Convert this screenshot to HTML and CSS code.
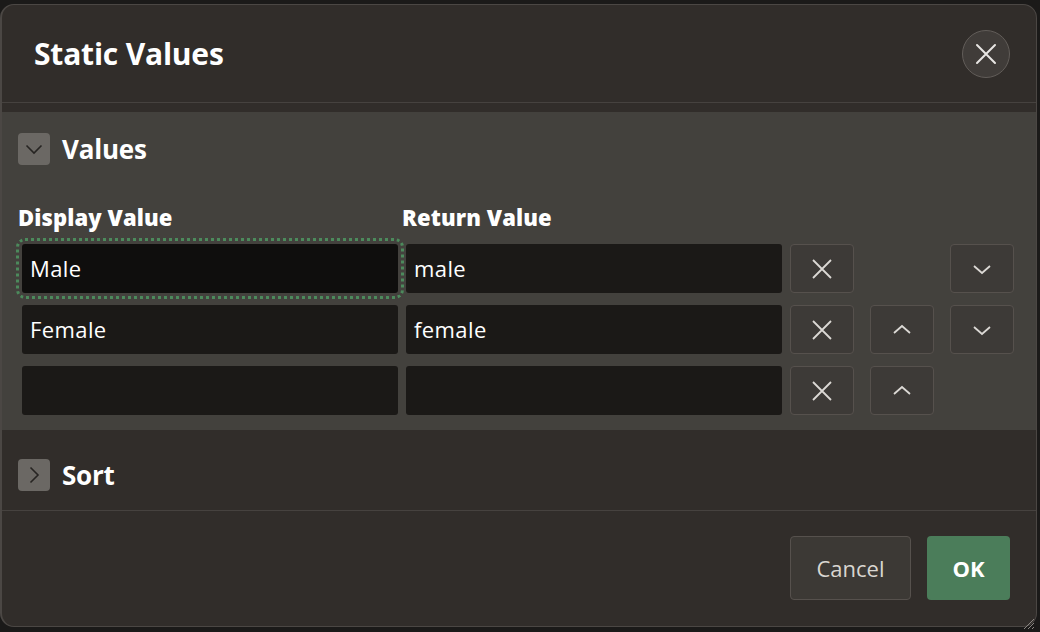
FILE: index.html
```html
<!DOCTYPE html>
<html>
<head>
<meta charset="utf-8">
<link rel="stylesheet" href="styles.css">
</head>
<body>
<div class="dialog">
  <div class="dlg-head">
    <h1 class="dlg-title">Static Values</h1>
    <button class="close-btn" aria-label="Close">
      <svg width="22" height="22" viewBox="0 0 22 22"><path d="M2 2L20 20M20 2L2 20" stroke="#e8e6e3" stroke-width="2" stroke-linecap="round"/></svg>
    </button>
  </div>
  <div class="dlg-body">
    <section class="region region-open">
      <div class="region-head">
        <span class="toggle">
          <svg width="20" height="20" viewBox="0 0 20 20"><path d="M2.5 6.5L10 14L17.5 6.5" fill="none" stroke="#262422" stroke-width="1.6"/></svg>
        </span>
        <h2 class="region-title">Values</h2>
      </div>
      <div class="grid-wrap">
        <div class="labels">
          <div class="lbl">Display Value</div>
          <div class="lbl">Return Value</div>
        </div>
        <div class="row">
          <div class="inp inp-focus">Male</div>
          <div class="inp">male</div>
          <button class="ib"><svg width="22" height="22" viewBox="0 0 22 22"><path d="M2 2L20 20M20 2L2 20" stroke="#dcd9d5" stroke-width="1.8"/></svg></button>
          <span class="cell"></span>
          <span class="cell"><button class="ib"><svg width="20" height="12" viewBox="0 0 20 12"><path d="M2 3L10 10L18 3" fill="none" stroke="#dcd9d5" stroke-width="1.8"/></svg></button></span>
        </div>
        <div class="row">
          <div class="inp">Female</div>
          <div class="inp">female</div>
          <button class="ib"><svg width="22" height="22" viewBox="0 0 22 22"><path d="M2 2L20 20M20 2L2 20" stroke="#dcd9d5" stroke-width="1.8"/></svg></button>
          <span class="cell"><button class="ib"><svg width="20" height="12" viewBox="0 0 20 12"><path d="M2 9L10 2L18 9" fill="none" stroke="#dcd9d5" stroke-width="1.8"/></svg></button></span>
          <span class="cell"><button class="ib"><svg width="20" height="12" viewBox="0 0 20 12"><path d="M2 3L10 10L18 3" fill="none" stroke="#dcd9d5" stroke-width="1.8"/></svg></button></span>
        </div>
        <div class="row">
          <div class="inp"></div>
          <div class="inp"></div>
          <button class="ib"><svg width="22" height="22" viewBox="0 0 22 22"><path d="M2 2L20 20M20 2L2 20" stroke="#dcd9d5" stroke-width="1.8"/></svg></button>
          <span class="cell"><button class="ib"><svg width="20" height="12" viewBox="0 0 20 12"><path d="M2 9L10 2L18 9" fill="none" stroke="#dcd9d5" stroke-width="1.8"/></svg></button></span>
          <span class="cell"></span>
        </div>
      </div>
    </section>
    <section class="region region-closed">
      <div class="region-head">
        <span class="toggle">
          <svg width="20" height="20" viewBox="0 0 20 20"><path d="M6.5 2.5L14 10L6.5 17.5" fill="none" stroke="#262422" stroke-width="1.6"/></svg>
        </span>
        <h2 class="region-title">Sort</h2>
      </div>
    </section>
  </div>
  <div class="dlg-foot">
    <button class="btn btn-cancel">Cancel</button>
    <button class="btn btn-ok">OK</button>
    <span class="resize">
      <svg width="12" height="12" viewBox="0 0 12 12"><path d="M11 1L1 11M11 5L5 11M11 9L9 11" stroke="#8a8581" stroke-width="1"/></svg>
    </span>
  </div>
</div>
</body>
</html>
```
FILE: styles.css
```css
html, body {
  margin: 0;
  padding: 0;
}
body {
  background: #1b1a19;
  width: 1040px;
  height: 632px;
  overflow: hidden;
  font-family: "Open Sans", "Noto Sans", sans-serif;
  color: #fff;
}
button {
  font-family: inherit;
  cursor: pointer;
}
.dialog {
  position: relative;
  margin-top: 4px;
  width: 1037px;
  height: 623px;
  box-sizing: border-box;
  background: #312d2a;
  border: 1px solid #4b4744;
  border-left-width: 2px;
  border-radius: 14px;
  display: flex;
  flex-direction: column;
}
.dlg-head {
  height: 97px;
  flex: none;
  display: flex;
  align-items: center;
  justify-content: space-between;
  padding: 0 26px 0 32px;
  border-bottom: 1px solid #46423f;
}
.dlg-title {
  margin: 0;
  font-size: 30px;
  font-weight: 700;
  letter-spacing: -0.2px;
  margin-top: 0;
}
.close-btn {
  width: 48px;
  height: 48px;
  border-radius: 50%;
  background: #403c39;
  border: 1px solid #625d59;
  display: flex;
  align-items: center;
  justify-content: center;
  padding: 0;
}
.close-btn svg { width: 22px; height: 22px; }
.dlg-body {
  padding-top: 9px;
  flex: none;
}
.region-open {
  background: #43413d;
  height: 318px;
  box-sizing: border-box;
  padding: 21px 0 0 16px;
}
.region-closed {
  height: 81px;
  box-sizing: border-box;
  padding: 29px 0 0 16px;
  border-bottom: 1px solid #46423f;
}
.region-head {
  display: flex;
  align-items: center;
  height: 32px;
}
.toggle {
  width: 32px;
  height: 32px;
  border-radius: 4px;
  background: #6b6864;
  display: flex;
  align-items: center;
  justify-content: center;
}
.region-title {
  margin: 0 0 0 12px;
  font-size: 26px;
  font-weight: 700;
  letter-spacing: -0.2px;
}
.grid-wrap {
  margin-top: 35px;
}
.labels {
  display: flex;
  height: 34px;
  margin-bottom: 10px;
}
.lbl {
  width: 384px;
  font-size: 22px;
  font-weight: 800;
  letter-spacing: 0.1px;
  line-height: 34px;
}
.row {
  display: flex;
  gap: 8px;
  padding-left: 4px;
  height: 49px;
  margin-bottom: 12px;
}
.inp {
  width: 376px;
  height: 49px;
  box-sizing: border-box;
  background: #1b1917;
  border-radius: 3px;
  padding-left: 8px;
  font-size: 22px;
  letter-spacing: 0.4px;
  line-height: 49px;
  color: #fff;
}
.inp-focus {
  background: #0f0e0d;
  outline: 3px dotted #4c8a5c;
  outline-offset: 3px;
}
.ib {
  width: 64px;
  height: 49px;
  box-sizing: border-box;
  background: #3d3a37;
  border: 1px solid #56514d;
  border-radius: 4px;
  display: flex;
  align-items: center;
  justify-content: center;
  padding: 0;
  flex: none;
}
.cell {
  width: 72px;
  display: flex;
  justify-content: flex-end;
  flex: none;
}
.dlg-foot {
  flex: 1;
  display: flex;
  justify-content: flex-end;
  align-items: flex-start;
  padding: 25px 26px 0 0;
  gap: 16px;
}
.btn {
  height: 64px;
  border-radius: 4px;
  font-size: 22px;
  padding: 0;
}
.btn-cancel {
  width: 121px;
  background: #3c3935;
  border: 1px solid #56514d;
  color: #d9d6d1;
}
.btn-ok {
  width: 83px;
  background: #4b7d5a;
  border: none;
  color: #fff;
  font-weight: 700;
}
.resize {
  position: absolute;
  right: 1px;
  bottom: 1px;
  width: 12px;
  height: 12px;
}
```
